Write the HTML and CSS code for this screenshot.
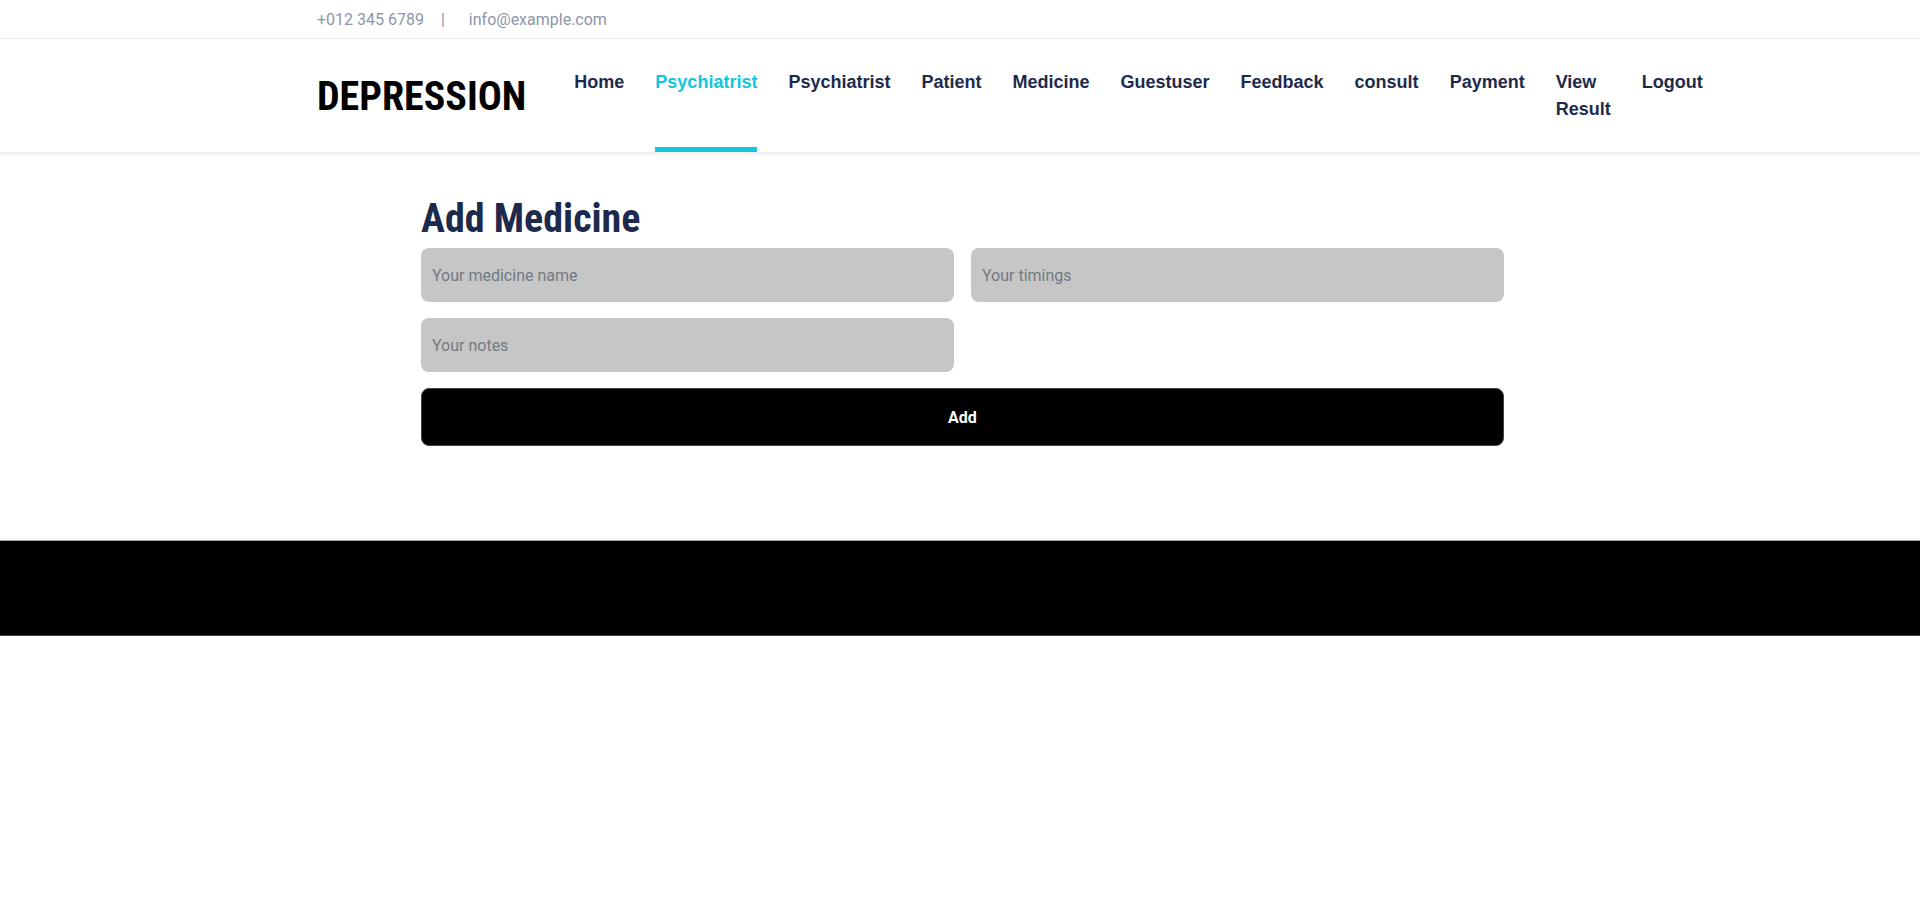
FILE: index.html
```html
<!DOCTYPE html>
<html lang="en">
<head>
<meta charset="utf-8">
<title>DEPRESSION - Add Medicine</title>
<link rel="stylesheet" href="styles.css">
</head>
<body>
<div class="topbar">
  <div class="container topbar-inner">
    <span>+012 345 6789</span>
    <span class="sep">|</span>
    <span>info@example.com</span>
  </div>
</div>
<header class="header">
  <div class="container header-inner">
    <a class="logo" href="#">DEPRESSION</a>
    <nav class="nav">
      <a class="nav-link" href="#">Home</a>
      <a class="nav-link active" href="#">Psychiatrist</a>
      <a class="nav-link" href="#">Psychiatrist</a>
      <a class="nav-link" href="#">Patient</a>
      <a class="nav-link" href="#">Medicine</a>
      <a class="nav-link" href="#">Guestuser</a>
      <a class="nav-link" href="#">Feedback</a>
      <a class="nav-link" href="#">consult</a>
      <a class="nav-link" href="#">Payment</a>
      <a class="nav-link" href="#">View Result</a>
      <a class="nav-link" href="#">Logout</a>
    </nav>
  </div>
</header>
<main class="main">
  <form class="form-wrap">
    <h1 class="title">Add Medicine</h1>
    <div class="form-grid">
      <input class="field" type="text" placeholder="Your medicine name">
      <input class="field" type="text" placeholder="Your timings">
      <input class="field" type="text" placeholder="Your notes">
      <button class="btn" type="button">Add</button>
    </div>
  </form>
</main>
<footer class="footer"></footer>
</body>
</html>
```
FILE: styles.css
```css
* { box-sizing: border-box; }
html, body { margin: 0; padding: 0; background: #fff; }
body { font-family: Roboto, "Liberation Sans", sans-serif; color: #1d2a4d; }
a { text-decoration: none; }

.container { width: 1286px; margin: 0 auto; }

.topbar { height: 39px; border-bottom: 1px solid #ebebeb; }
.topbar-inner { display: flex; align-items: center; height: 38px; font-size: 16px; color: #8d96a8; }
.topbar-inner .sep { margin: 0 24px 0 17px; }

.header { height: 115px; border-bottom: 2px solid #f0f0f0; box-shadow: 0 1px 2px rgba(0,0,0,0.04); }
.header-inner { display: flex; height: 113px; }
.logo { align-self: center; margin-top: 3px; margin-right: 48px; font-family: "Roboto Condensed", Roboto, sans-serif; font-weight: 700; font-size: 40px; line-height: 1; color: #000; white-space: nowrap; }
.nav { display: flex; gap: 31px; }
.nav-link { position: relative; display: block; width: min-content; padding-top: 30px; font-family: "Liberation Sans", Arial, sans-serif; font-weight: 700; font-size: 18px; line-height: 27px; color: #1d2a4d; }
.nav-link.active { color: #13c5dd; }
.nav-link.active::after { content: ""; position: absolute; left: 0; right: 0; bottom: 0; height: 5px; background: #13c5dd; }

.main { padding-top: 41px; padding-bottom: 94px; }
.form-wrap { width: 1083px; margin-left: calc(50% - 539px); }
.title { margin: 0 0 5px; font-family: "Roboto Condensed", Roboto, sans-serif; font-weight: 700; font-size: 40px; line-height: 1.2; color: #1d2a4d; }
.form-grid { display: grid; grid-template-columns: 1fr 1fr; gap: 16px 17px; }
.field { height: 54px; border: none; border-radius: 8px; background: #c6c6c6; padding: 0 11px; font-family: Roboto, sans-serif; font-size: 16px; color: #333; outline: none; }
.field::placeholder { color: #737983; }
.btn { grid-column: 1 / span 2; height: 58px; border: 1px solid #444; border-radius: 8px; background: #000; color: #fff; font-family: Roboto, sans-serif; font-weight: 700; font-size: 16px; cursor: pointer; }

.footer { height: 96px; background: #000; border-top: 1px solid #a8a8a8; border-bottom: 1px solid #444; }
```
